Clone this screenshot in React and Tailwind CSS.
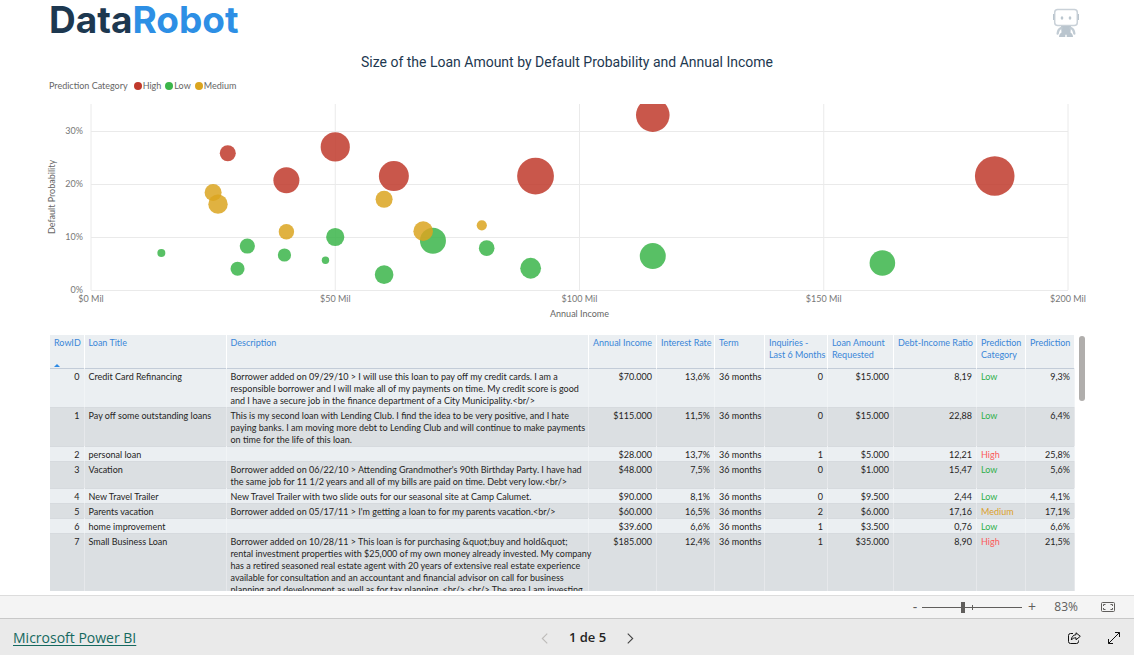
import { useState } from 'react';

const PLOT_HEIGHT = 186;
const MAX_INCOME = 200;
const PX_PER_PERCENT = 5.3;

const categories = [
  { name: 'High', dot: 'bg-[#c0392b]', fill: 'fill-[#c0392b]', text: 'text-[#fb5a5a]' },
  { name: 'Low', dot: 'bg-[#3bb54a]', fill: 'fill-[#3bb54a]', text: 'text-[#2fb04a]' },
  { name: 'Medium', dot: 'bg-[#daa520]', fill: 'fill-[#daa520]', text: 'text-[#dba02a]' },
];

const findCategory = (name) => categories.find((c) => c.name === name);

// income in millions, probability in percent, radius from the loan amount
const bubbles = [
  { category: 'High', income: 28, probability: 25.8, r: 8 },
  { category: 'High', income: 40, probability: 20.7, r: 13 },
  { category: 'High', income: 50, probability: 27, r: 14.6 },
  { category: 'High', income: 62, probability: 21.5, r: 15 },
  { category: 'High', income: 91, probability: 21.5, r: 18.4 },
  { category: 'High', income: 115, probability: 33, r: 16.8 },
  { category: 'High', income: 185, probability: 21.5, r: 19.8 },
  { category: 'Low', income: 14.4, probability: 7, r: 4 },
  { category: 'Low', income: 32, probability: 8.3, r: 7.6 },
  { category: 'Low', income: 30, probability: 4, r: 7 },
  { category: 'Low', income: 39.6, probability: 6.6, r: 6.6 },
  { category: 'Low', income: 48, probability: 5.6, r: 3.7 },
  { category: 'Low', income: 50, probability: 10, r: 9.1 },
  { category: 'Low', income: 60, probability: 2.9, r: 9.3 },
  { category: 'Low', income: 70, probability: 9.3, r: 13 },
  { category: 'Low', income: 81, probability: 7.9, r: 7.8 },
  { category: 'Low', income: 90, probability: 4.1, r: 10.4 },
  { category: 'Low', income: 115, probability: 6.4, r: 13 },
  { category: 'Low', income: 162, probability: 5.1, r: 12.8 },
  { category: 'Medium', income: 25, probability: 18.4, r: 8.5 },
  { category: 'Medium', income: 26, probability: 16.2, r: 9.7 },
  { category: 'Medium', income: 40, probability: 11, r: 7.7 },
  { category: 'Medium', income: 60, probability: 17.1, r: 8.5 },
  { category: 'Medium', income: 68, probability: 11.1, r: 9.8 },
  { category: 'Medium', income: 80, probability: 12.2, r: 5.1 },
];

const columns = [
  { key: 'id', label: 'RowID', width: 'w-[34px]', numeric: true },
  { key: 'title', label: 'Loan Title', width: 'w-[142px]' },
  { key: 'description', label: 'Description', width: '' },
  { key: 'income', label: 'Annual Income', width: 'w-[68px]', numeric: true },
  { key: 'rate', label: 'Interest Rate', width: 'w-[58px]', numeric: true },
  { key: 'term', label: 'Term', width: 'w-[50px]' },
  { key: 'inquiries', label: 'Inquiries -\nLast 6 Months', width: 'w-[63px]', numeric: true },
  { key: 'amount', label: 'Loan Amount\nRequested', width: 'w-[66px]', numeric: true },
  { key: 'ratio', label: 'Debt-Income Ratio', width: 'w-[83px]', numeric: true },
  { key: 'category', label: 'Prediction\nCategory', width: 'w-[49px]' },
  { key: 'prediction', label: 'Prediction', width: 'w-[49px]', numeric: true },
];

const loans = [
  {
    id: 0, title: 'Credit Card Refinancing',
    description: 'Borrower added on 09/29/10 > I will use this loan to pay off my credit cards. I am a\nresponsible borrower and I will make all of my payments on time. My credit score is good\nand I have a secure job in the finance department of a City Municipality.<br/>',
    income: '$70.000', rate: '13,6%', term: '36 months', inquiries: 0, amount: '$15.000', ratio: '8,19', category: 'Low', prediction: '9,3%',
  },
  {
    id: 1, title: 'Pay off some outstanding loans',
    description: 'This is my second loan with Lending Club. I find the idea to be very positive, and I hate\npaying banks. I am moving more debt to Lending Club and will continue to make payments\non time for the life of this loan.',
    income: '$115.000', rate: '11,5%', term: '36 months', inquiries: 0, amount: '$15.000', ratio: '22,88', category: 'Low', prediction: '6,4%',
  },
  {
    id: 2, title: 'personal loan', description: '',
    income: '$28.000', rate: '13,7%', term: '36 months', inquiries: 1, amount: '$5.000', ratio: '12,21', category: 'High', prediction: '25,8%',
  },
  {
    id: 3, title: 'Vacation',
    description: "Borrower added on 06/22/10 > Attending Grandmother's 90th Birthday Party. I have had\nthe same job for 11 1/2 years and all of my bills are paid on time. Debt very low.<br/>",
    income: '$48.000', rate: '7,5%', term: '36 months', inquiries: 0, amount: '$1.000', ratio: '15,47', category: 'Low', prediction: '5,6%',
  },
  {
    id: 4, title: 'New Travel Trailer',
    description: 'New Travel Trailer with two slide outs for our seasonal site at Camp Calumet.',
    income: '$90.000', rate: '8,1%', term: '36 months', inquiries: 0, amount: '$9.500', ratio: '2,44', category: 'Low', prediction: '4,1%',
  },
  {
    id: 5, title: 'Parents vacation',
    description: "Borrower added on 05/17/11 > I'm getting a loan to for my parents vacation.<br/>",
    income: '$60.000', rate: '16,5%', term: '36 months', inquiries: 2, amount: '$6.000', ratio: '17,16', category: 'Medium', prediction: '17,1%',
  },
  {
    id: 6, title: 'home improvement', description: '',
    income: '$39.600', rate: '6,6%', term: '36 months', inquiries: 1, amount: '$3.500', ratio: '0,76', category: 'Low', prediction: '6,6%',
  },
  {
    id: 7, title: 'Small Business Loan',
    description: 'Borrower added on 10/28/11 > This loan is for purchasing &quot;buy and hold&quot;\nrental investment properties with $25,000 of my own money already invested. My company\nhas a retired seasoned real estate agent with 20 years of extensive real estate experience\navailable for consultation and an accountant and financial advisor on call for business\nplanning and development as well as for tax planning. <br/> <br/> The area I am investing',
    income: '$185.000', rate: '12,4%', term: '36 months', inquiries: 1, amount: '$35.000', ratio: '8,90', category: 'High', prediction: '21,5%',
  },
];

const RobotIcon = () => (
  <svg viewBox="0 0 26 29" className="w-[26px] h-[29px]" aria-hidden="true">
    <rect x="1.7" y="1.500" width="22.6" height="16" rx="3" fill="#fff" stroke="#c9d1d8" strokeWidth="1.5" />
    <path d="M.6 6v6M25.4 6v6" stroke="#b9c4cd" strokeWidth="1.2" />
    <ellipse cx="9" cy="10" rx="1.3" ry="1.7" fill="#bcc7d0" />
    <ellipse cx="17" cy="10" rx="1.3" ry="1.7" fill="#bcc7d0" />
    <path d="M8 18h10l-.5 6.500c1.400.9 2.500 2.500 2.500 4.500h-6.300v-2.200h-1.400V29H6c0-2 1.100-3.600 2.500-4.500z" fill="#bac5ce" />
    <path d="M8.500 19.800C6.300 20.500 5 22.500 4.700 25.500M17.500 19.800c2.200.7 3.500 2.700 3.800 5.700" fill="none" stroke="#c2ccd4" strokeWidth="2.400" strokeLinecap="round" />
  </svg>
);

const BubbleChart = () => (
  <svg
    className="block w-full h-[216px] overflow-visible fill-[#777] text-[9px]"
    role="img"
    aria-label="Size of the Loan Amount by Default Probability and Annual Income"
  >
    {[0, 10, 20, 30].map((tick) => {
      const y = PLOT_HEIGHT - tick * PX_PER_PERCENT;
      return (
        <g key={tick}>
          <line x1="0" x2="100%" y1={Math.round(y) + 0.5} y2={Math.round(y) + 0.5} stroke="#eaeaea" />
          <text x="-8" y={y + 3} textAnchor="end">{tick}%</text>
        </g>
      );
    })}
    {[0, 50, 100, 150, 200].map((tick) => (
      <g key={tick}>
        <line x1={`${(tick / MAX_INCOME) * 100}%`} x2={`${(tick / MAX_INCOME) * 100}%`} y1="0" y2={PLOT_HEIGHT} stroke="#eaeaea" />
        <text x={`${(tick / MAX_INCOME) * 100}%`} y="198" textAnchor="middle">${tick} Mil</text>
      </g>
    ))}
    <svg width="100%" height={PLOT_HEIGHT} className="overflow-hidden">
      {bubbles.map((b) => (
        <circle
          key={`${b.category}-${b.income}`}
          cx={`${(b.income / MAX_INCOME) * 100}%`}
          cy={PLOT_HEIGHT - b.probability * PX_PER_PERCENT}
          r={b.r}
          fillOpacity="0.85"
          className={findCategory(b.category).fill}
        />
      ))}
    </svg>
    <text x="50%" y="213" textAnchor="middle" className="fill-[#666]">Annual Income</text>
    <text transform="translate(-36 93) rotate(-90)" textAnchor="middle" className="fill-[#666]">Default Probability</text>
  </svg>
);

const LoanTable = () => (
  <table className="w-full table-fixed border-collapse text-[9px] leading-3">
    <thead>
      <tr className="h-[33px] bg-[#ebeff2] border-b border-[#c3ccd8] text-[#3a86d8]">
        {columns.map((col) => (
          <th key={col.key} className={`${col.width} relative px-1 pt-0.5 text-left align-top font-normal whitespace-pre border-r border-r-white/30`}>
            {col.label}
            {col.key === 'id' && (
              <svg viewBox="0 0 6 3" className="absolute left-1 bottom-px w-[6px] h-[3px]" aria-hidden="true">
                <path d="M0 3 3 0l3 3z" fill="#2d8ae5" />
              </svg>
            )}
          </th>
        ))}
      </tr>
    </thead>
    <tbody className="text-[#252423]">
      {loans.map((loan) => (
        <tr key={loan.id} className="h-[15px] odd:bg-[#ebeff2] even:bg-[#dbdfe2] border-b border-[#d6dade]">
          {columns.map((col) => (
            <td
              key={col.key}
              className={`px-1 pt-0.5 align-top whitespace-pre border-r border-r-white/30 ${col.numeric ? 'text-right' : ''} ${col.key === 'category' ? findCategory(loan.category).text : ''}`}
            >
              {loan[col.key]}
            </td>
          ))}
        </tr>
      ))}
    </tbody>
  </table>
);

const App = () => {
  const [zoom, setZoom] = useState(41);
  const [page, setPage] = useState(1);

  return (
    <div className="h-screen flex flex-col bg-white overflow-hidden font-['Open_Sans','Noto_Sans',sans-serif]">
      <main className="flex-1 min-h-0 flex flex-col px-[49px] pb-1 font-['Lato',sans-serif]">
        <header className="h-[42px] flex items-start justify-between pr-1.5">
          <h1 className="font-['Inter',sans-serif] text-[37px] leading-10 font-bold text-[#1d3850]">
            Data<span className="text-[#2d8fe5]">Robot</span>
          </h1>
          <div className="pt-2">
            <RobotIcon />
          </div>
        </header>

        <section>
          <h2 className="pt-2.5 text-center font-['Roboto',sans-serif] text-sm leading-5 text-[#1d3850]">
            Size of the Loan Amount by Default Probability and Annual Income
          </h2>
          <div className="mt-2 flex items-center gap-1 text-[9px] leading-3 text-[#666]">
            <span className="mr-0.5">Prediction Category</span>
            {categories.map((c) => (
              <span key={c.name} className="flex items-center gap-px">
                <span className={`size-2 rounded-full ${c.dot}`} />
                {c.name}
              </span>
            ))}
          </div>
          <div className="mt-3 pl-[42px] pr-[17px]">
            <BubbleChart />
          </div>
        </section>

        <section className="mt-[15px] flex-1 min-h-0 flex gap-1 pl-px">
          <div className="flex-1 overflow-hidden">
            <LoanTable />
          </div>
          <div className="w-1.5 h-[65px] mt-px rounded-full bg-[#b0aeac]" />
        </section>
      </main>

      <div className="h-[23px] shrink-0 flex items-center justify-end pr-[19px] bg-[#f4f4f4] border-t border-[#dcdcdc] text-[#605e5c]">
        <button type="button" aria-label="Zoom out" onClick={() => setZoom(Math.max(0, zoom - 5))} className="w-3.5 text-sm leading-4">-</button>
        <div className="relative flex items-center w-[100px] h-4">
          <input
            type="range"
            aria-label="Zoom"
            min="0"
            max="100"
            value={zoom}
            onChange={(e) => setZoom(Number(e.target.value))}
            className="w-full h-px appearance-none bg-[#605e5c] [&::-webkit-slider-thumb]:appearance-none [&::-webkit-slider-thumb]:w-1 [&::-webkit-slider-thumb]:h-[11px] [&::-webkit-slider-thumb]:bg-[#605e5c]"
          />
          <span className="absolute left-1/2 top-1.5 w-px h-[5px] bg-[#605e5c]" />
        </div>
        <button type="button" aria-label="Zoom in" onClick={() => setZoom(Math.min(100, zoom + 5))} className="w-5 text-sm leading-4">+</button>
        <span className="w-9 text-right text-xs">83%</span>
        <button type="button" aria-label="Fit to page" className="ml-[23px]">
          <svg viewBox="0 0 14 10" className="block w-3.5 h-2.5" fill="none" stroke="#605e5c">
            <rect x=".5" y=".5" width="13" height="9" rx="1" />
            <path d="M4.500 2.500h-2v1.500M9.500 2.500h2v1.500M4.500 7.500h-2V6M9.500 7.500h2V6" />
          </svg>
        </button>
      </div>

      <footer className="h-[37px] shrink-0 grid grid-cols-3 items-center pt-0.5 pl-[13px] pr-3.5 bg-[#eaeaea] border-t border-[#c8c8c8]">
        <a href="#powerbi" className="justify-self-start text-sm leading-5 text-[#15695f] underline underline-offset-2">Microsoft Power BI</a>
        <nav className="flex items-center justify-center gap-[21px] pl-[42px]">
          <button type="button" aria-label="Previous page" disabled={page === 1} onClick={() => setPage(page - 1)} className="text-[#252423] disabled:text-[#bdbbb9]">
            <svg viewBox="0 0 6 10" className="w-[7px] h-[11px]" fill="none" stroke="currentColor">
              <path d="M5.500.5 1 5l4.500 4.500" />
            </svg>
          </button>
          <span className="text-[13px] font-semibold text-[#252423]">{page} de 5</span>
          <button type="button" aria-label="Next page" disabled={page === 5} onClick={() => setPage(page + 1)} className="text-[#444] disabled:text-[#bdbbb9]">
            <svg viewBox="0 0 6 10" className="w-[7px] h-[11px]" fill="none" stroke="currentColor">
              <path d="M.5.5 5 5 .5 9.500" />
            </svg>
          </button>
        </nav>
        <div className="flex items-center justify-end gap-[27px] text-[#111]">
          <button type="button" aria-label="Share">
            <svg viewBox="0 0 13 12" className="w-[13px] h-3" fill="none" stroke="currentColor">
              <path d="M5 1.500H2.500a2 2 0 0 0-2 2v6a2 2 0 0 0 2 2h6a2 2 0 0 0 2-2V8.500" />
              <path d="M8 .8 12.300 4.300 8 7.800V5.800C5.800 5.800 4.500 6.500 3.300 8 3.500 5 5.200 2.900 8 2.700z" strokeLinejoin="round" />
            </svg>
          </button>
          <button type="button" aria-label="Full screen">
            <svg viewBox="0 0 12 12" className="size-3" fill="none" stroke="currentColor">
              <path d="M7 .5h4.500V5M5 11.500H.5V7M.5 11.500l11-11" />
            </svg>
          </button>
        </div>
      </footer>
    </div>
  );
};

export default App;
